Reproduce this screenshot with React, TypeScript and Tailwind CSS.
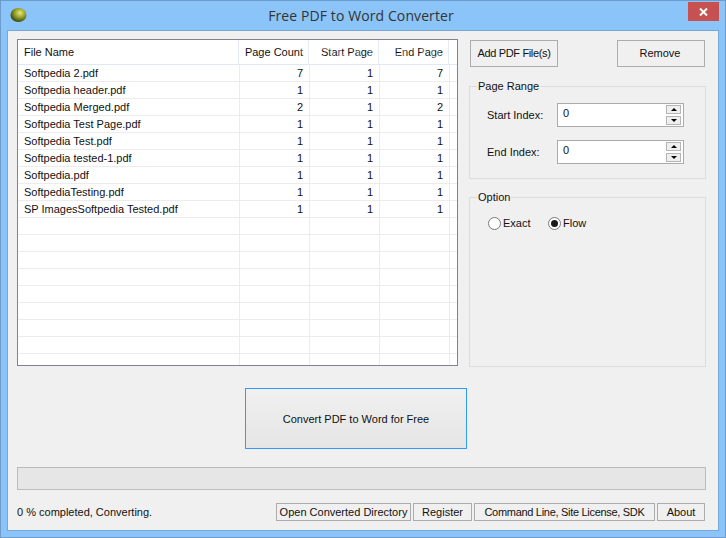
const files = [
  ["Softpedia 2.pdf", 7, 1, 7],
  ["Softpedia header.pdf", 1, 1, 1],
  ["Softpedia Merged.pdf", 2, 1, 2],
  ["Softpedia Test Page.pdf", 1, 1, 1],
  ["Softpedia Test.pdf", 1, 1, 1],
  ["Softpedia tested-1.pdf", 1, 1, 1],
  ["Softpedia.pdf", 1, 1, 1],
  ["SoftpediaTesting.pdf", 1, 1, 1],
  ["SP ImagesSoftpedia Tested.pdf", 1, 1, 1],
];

const emptyRows = Array.from({ length: 9 });

function Row({ cells }: { cells: (string | number)[] }) {
  return (
    <div className="grid grid-cols-[222px_70px_70px_70px_1fr] h-[17px] border-b border-[#ececec] leading-[17px]">
      <div className="border-r border-[#ececec] pl-[6px]">{cells[0]}</div>
      <div className="border-r border-[#ececec] pr-[6px] text-right">{cells[1]}</div>
      <div className="border-r border-[#ececec] pr-[6px] text-right">{cells[2]}</div>
      <div className="border-r border-[#ececec] pr-[6px] text-right">{cells[3]}</div>
      <div />
    </div>
  );
}

function Spinner({ label }: { label: string }) {
  return (
    <div className="flex items-center">
      <span className="w-[70px] pl-[17px] whitespace-nowrap">{label}</span>
      <div className="flex justify-between w-[127px] h-[24px] ml-[17px] bg-white border border-[#ababab] pl-[5px] pr-[1px] leading-[18px]">
        <span>0</span>
        <div className="flex flex-col gap-[2px] pt-[1px] pr-[1px]">
          <div className="flex items-center justify-center w-[15px] h-[9px] bg-[#efefef] border border-[#b5b5b5]">
            <div className="w-0 h-0 border-x-[3px] border-x-transparent border-b-[3px] border-b-black" />
          </div>
          <div className="flex items-center justify-center w-[15px] h-[9px] bg-[#efefef] border border-[#b5b5b5]">
            <div className="w-0 h-0 border-x-[3px] border-x-transparent border-t-[3px] border-t-black" />
          </div>
        </div>
      </div>
    </div>
  );
}

function Group({ title, className, children }: { title: string; className: string; children?: React.ReactNode }) {
  return (
    <div className={`relative border border-[#dcdcdc] ${className}`}>
      <span className="absolute left-[7px] -top-[9px] bg-[#f0f0f0] px-[1px] leading-[16px]">{title}</span>
      {children}
    </div>
  );
}

function SmallButton({ children, className }: { children: React.ReactNode; className: string }) {
  return (
    <div className={`flex items-center justify-center h-[18px] bg-[#f0f0f0] border border-[#acacac] whitespace-nowrap ${className}`}>
      {children}
    </div>
  );
}

export default function App() {
  return (
    <div
      className="relative flex flex-col w-[726px] h-[538px] bg-[#8bc4f8] border border-[#6d9ccc] text-[11px] text-[#111]"
      style={{ fontFamily: '"Liberation Sans", sans-serif' }}
    >
      {/* Title bar */}
      <div className="relative flex items-center justify-center h-[29px] pr-[4px] shrink-0">
        <svg className="absolute left-[9px] top-[6px]" width="17" height="16" viewBox="0 0 17 16">
          <defs>
            <radialGradient id="ball" cx="0.6" cy="0.35" r="0.7">
              <stop offset="0" stopColor="#e6ea7a" />
              <stop offset="0.45" stopColor="#9aa52c" />
              <stop offset="1" stopColor="#2f3a0c" />
            </radialGradient>
          </defs>
          <ellipse cx="8.5" cy="8" rx="8" ry="7" fill="url(#ball)" />
        </svg>
        <span className="text-[14px] tracking-[0.1px] text-[#333] leading-none" style={{ fontFamily: '"Open Sans", sans-serif' }}>
          Free PDF to Word Converter
        </span>
        <div className="absolute left-[687px] top-[1px] flex items-center justify-center w-[31px] h-[19px] bg-[#c75050]">
          <svg width="9" height="8" viewBox="0 0 9 8">
            <path d="M1 .5l7 7M8 .5l-7 7" stroke="#fff" strokeWidth="2" fill="none" />
          </svg>
        </div>
      </div>

      {/* Client area */}
      <div className="flex flex-col w-[712px] h-[501px] ml-[6px] bg-[#f0f0f0] border border-[#78a6d6] pt-[8px] pl-[9px]">
        <div className="flex">
          {/* File list */}
          <div className="w-[441px] h-[327px] bg-white border border-[#82828c] overflow-hidden">
            <div className="grid grid-cols-[221px_70px_70px_70px_1fr] h-[25px] border-b border-[#dfe9f5] leading-[25px]">
              <div className="border-r border-[#e3ebf6] pl-[6px]">File Name</div>
              <div className="border-r border-[#e3ebf6] pr-[5px] text-right whitespace-nowrap">Page Count</div>
              <div className="border-r border-[#e3ebf6] pr-[5px] text-right whitespace-nowrap">Start Page</div>
              <div className="border-r border-[#e3ebf6] pr-[5px] text-right whitespace-nowrap">End Page</div>
              <div />
            </div>
            {files.map((f) => (
              <Row key={f[0]} cells={f} />
            ))}
            {emptyRows.map((_, i) => (
              <Row key={i} cells={["", "", "", ""]} />
            ))}
          </div>

          {/* Right column */}
          <div className="flex flex-col w-[237px] ml-[11px]">
            <div className="flex justify-between px-[1px] mt-[1px]">
              <div className="flex items-center justify-center w-[88px] h-[27px] border border-[#acacac] bg-[#f0f0f0] tracking-[-0.35px] whitespace-nowrap">
                Add PDF File(s)
              </div>
              <div className="flex items-center justify-center w-[88px] h-[27px] pr-[2px] border border-[#acacac] bg-[#f0f0f0]">
                Remove
              </div>
            </div>
            <Group title="Page Range" className="h-[93px] mt-[19px] pt-[16px] flex flex-col gap-[13px]">
              <Spinner label="Start Index:" />
              <Spinner label="End Index:" />
            </Group>
            <Group title="Option" className="h-[170px] mt-[18px] pt-[17px]">
              <div className="flex items-center pl-[18px] leading-[16px]">
                <span className="w-[13px] h-[13px] rounded-full bg-white border border-[#7a7a7a]" />
                <span className="ml-[2px] w-[45px]">Exact</span>
                <span className="flex items-center justify-center w-[13px] h-[13px] rounded-full bg-white border border-[#7a7a7a]">
                  <span className="w-[7px] h-[7px] rounded-full bg-[#1a1a1a]" />
                </span>
                <span className="ml-[2px]">Flow</span>
              </div>
            </Group>
          </div>
        </div>

        <div className="flex items-center justify-center w-[222px] h-[61px] ml-[228px] mt-[21px] pt-[2px] border border-[#3399ff] bg-gradient-to-b from-[#f0f0f0] to-[#e5e5e5]">
          Convert PDF to Word for Free
        </div>

        <div className="w-[689px] h-[23px] mt-[18px] bg-[#e6e6e6] border border-[#bcbcbc]" />

        <div className="flex items-center w-[689px] h-[18px] mt-[13px]">
          <span className="w-[259px] whitespace-nowrap">0 % completed, Converting.</span>
          <div className="flex gap-[2px]">
            <SmallButton className="w-[135px]">Open Converted Directory</SmallButton>
            <SmallButton className="w-[59px]">Register</SmallButton>
            <SmallButton className="w-[181px] tracking-[-0.3px]">Command Line, Site License, SDK</SmallButton>
            <SmallButton className="w-[48px]">About</SmallButton>
          </div>
        </div>
      </div>

      {/* Watermark */}
      <span className="absolute left-[298px] top-[42px] text-[24px] tracking-[1px] font-bold text-white opacity-25 leading-none">
        SOFTPEDIA
      </span>
    </div>
  );
}
